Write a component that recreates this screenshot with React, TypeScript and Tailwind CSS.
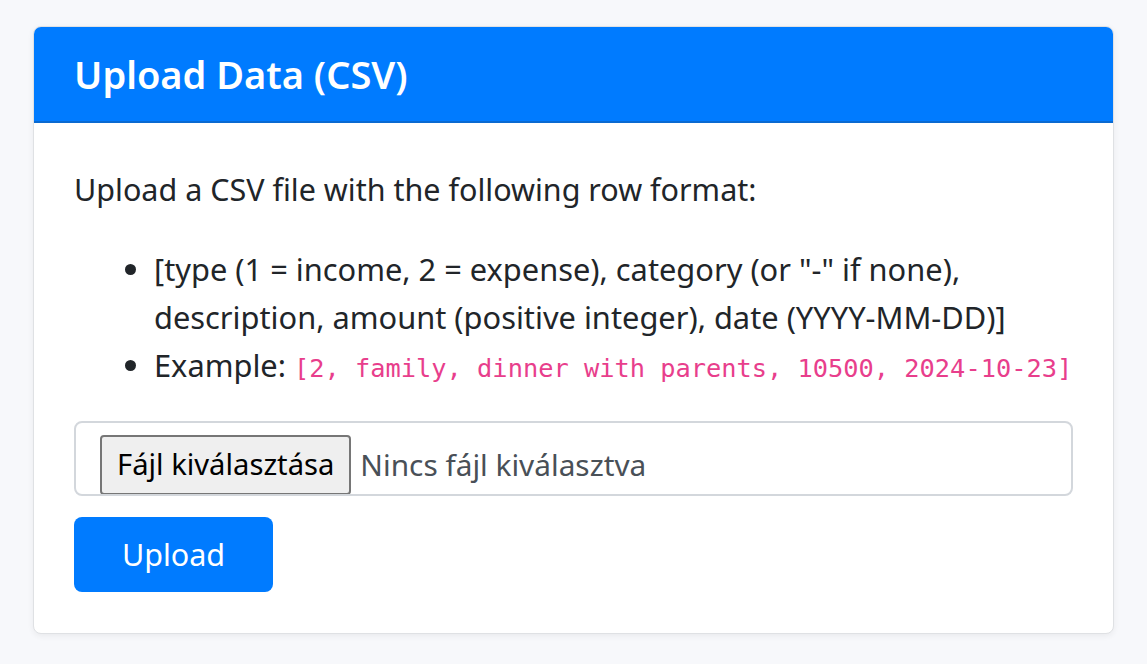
export default function App() {
  return (
    <div className="min-h-screen bg-[#f7f8fb] px-[33px] pt-[26px] font-['Noto_Sans',sans-serif] text-[#212529]">
      <div className="w-[1081px] overflow-hidden rounded-[8px] border border-[#dfe1e4] bg-white shadow-[0_2px_6px_rgba(0,0,0,0.06)]">
        <div className="border-b-2 border-[#0a6ad1] bg-[#007bff] px-[40px] py-[23px]">
          <h4 className="text-[38px] leading-[48px] font-semibold text-white">Upload Data (CSV)</h4>
        </div>
        <div className="px-[40px] pt-[42px] pb-[41px]">
          <p className="mb-[32px] text-[30.5px] leading-[48px]">Upload a CSV file with the following row format:</p>
          <ul className="mb-[29px] list-disc pl-[80px] text-[30.8px] leading-[48px]">
            <li>
              [type (1 = income, 2 = expense), category (or "-" if none), description, amount (positive integer), date
              (YYYY-MM-DD)]
            </li>
            <li className="whitespace-nowrap">
              Example:{" "}
              <code className="font-['DejaVu_Sans_Mono',monospace] text-[25.35px] text-[#e83e8c]">
                [2, family, dinner with parents, 10500, 2024-10-23]
              </code>
            </li>
          </ul>
          <div className="mb-[21px] flex h-[75px] items-start overflow-hidden rounded-[8px] border-2 border-[#d3d7dc] px-[24px] pt-[12px]">
            <span className="flex h-[60px] items-center rounded-[4px] border-2 border-[#767676] bg-[#efefef] px-[15px] text-[29.2px] text-black">
              Fájl kiválasztása
            </span>
            <span className="flex h-[60px] items-center pl-[9px] text-[29.8px] text-[#495057]">Nincs fájl kiválasztva</span>
          </div>
          <button className="h-[75px] w-[199px] rounded-[8px] bg-[#007bff] text-[30.5px] text-white">Upload</button>
        </div>
      </div>
    </div>
  );
}
